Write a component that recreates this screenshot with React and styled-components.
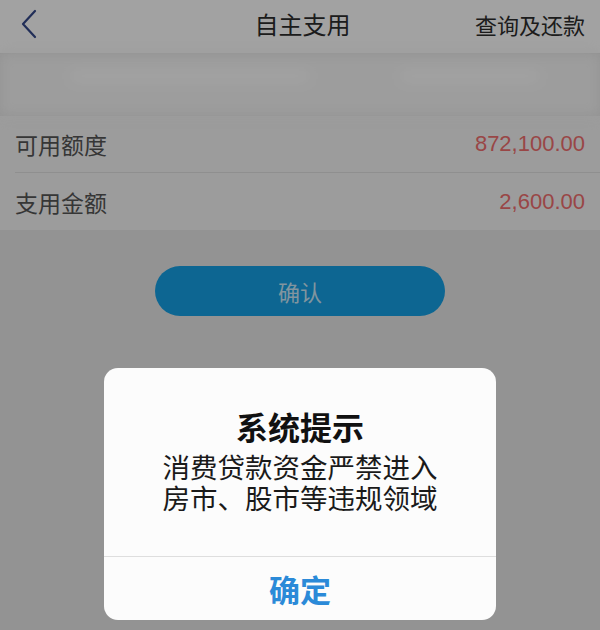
import { createGlobalStyle, styled } from "styled-components";

const GlobalStyle = createGlobalStyle`
  html, body {
    margin: 0;
    padding: 0;
    background: #e6e6e6;
  }
  * {
    box-sizing: border-box;
  }
`;

const Page = styled.div`
  position: relative;
  width: 600px;
  height: 630px;
  overflow: hidden;
  background: #e6e6e6;
  font-family: "Noto Sans CJK SC", "Noto Sans", sans-serif;
`;

const NavBar = styled.div`
  height: 54px;
  background: #fdfdfd;
  border-bottom: 1px solid #e2e2e2;
  display: grid;
  grid-template-columns: 1fr auto 1fr;
  align-items: center;
  padding: 0 15px 6px 20px;
`;

const BackButton = styled.div`
  display: flex;
  align-items: center;
`;

const NavTitle = styled.div`
  font-size: 24px;
  color: #2d2d2d;
`;

const NavAction = styled.div`
  justify-self: end;
  font-size: 22px;
  color: #2d2d2d;
`;

const BlurBlock = styled.div`
  height: 62px;
  background: #f6f6f6;
  border-bottom: 1px solid #e8e8e8;
  display: flex;
  justify-content: space-between;
  align-items: center;
  padding: 0 60px 18px 70px;
  filter: blur(7px);
`;

const BlurBar = styled.div`
  height: 12px;
  width: ${(p) => p.$w}px;
  background: #ffffff;
  border-radius: 6px;
`;

const InfoList = styled.div`
  background: #f4f4f4;
  padding-left: 15px;
`;

const Row = styled.div`
  height: 57px;
  display: flex;
  justify-content: space-between;
  align-items: center;
  padding-right: 15px;
  border-bottom: ${(p) => (p.$last ? "none" : "1px solid #e0e0e0")};
`;

const Label = styled.span`
  font-size: 23px;
  color: #555;
`;

const Amount = styled.span`
  font-family: "Liberation Sans", Arial, sans-serif;
  font-size: 22px;
  color: #f06e6e;
`;

const ButtonArea = styled.div`
  display: flex;
  justify-content: center;
  padding-top: 36px;
`;

const ConfirmButton = styled.button`
  width: 290px;
  height: 50px;
  border: none;
  border-radius: 25px;
  background: #15a0e4;
  color: rgba(255, 255, 255, 0.78);
  font-family: inherit;
  font-size: 22px;
`;

const Mask = styled.div`
  position: absolute;
  inset: 0;
  background: rgba(0, 0, 0, 0.36);
`;

const Dialog = styled.div`
  position: absolute;
  left: 104px;
  top: 368px;
  width: 392px;
  height: 252px;
  background: #fcfcfc;
  border-radius: 14px;
  display: flex;
  flex-direction: column;
  overflow: hidden;
`;

const DialogBody = styled.div`
  flex: 1;
  display: flex;
  flex-direction: column;
  align-items: center;
  padding-top: 38px;
  border-bottom: 1px solid #dedede;
`;

const DialogTitle = styled.div`
  font-size: 32px;
  line-height: 40px;
  font-weight: 700;
  color: #111;
`;

const DialogText = styled.div`
  margin-top: 5px;
  font-size: 27.5px;
  line-height: 31px;
  color: #1a1a1a;
  text-align: center;
`;

const DialogButton = styled.div`
  height: 63px;
  display: flex;
  align-items: center;
  justify-content: center;
  font-size: 31px;
  font-weight: 700;
  color: #2b8ad8;
`;

export default function App() {
  return (
    <>
      <GlobalStyle />
      <Page>
        <NavBar>
          <BackButton>
            <svg width="18" height="30" viewBox="0 0 18 30">
              <path
                d="M15 2 L3 15 L15 28"
                fill="none"
                stroke="#34498a"
                strokeWidth="2.2"
                strokeLinecap="round"
                strokeLinejoin="round"
              />
            </svg>
          </BackButton>
          <NavTitle>自主支用</NavTitle>
          <NavAction>查询及还款</NavAction>
        </NavBar>
        <BlurBlock>
          <BlurBar $w={240} />
          <BlurBar $w={140} />
        </BlurBlock>
        <InfoList>
          <Row>
            <Label>可用额度</Label>
            <Amount>872,100.00</Amount>
          </Row>
          <Row $last>
            <Label>支用金额</Label>
            <Amount>2,600.00</Amount>
          </Row>
        </InfoList>
        <ButtonArea>
          <ConfirmButton>确认</ConfirmButton>
        </ButtonArea>
        <Mask />
        <Dialog>
          <DialogBody>
            <DialogTitle>系统提示</DialogTitle>
            <DialogText>
              消费贷款资金严禁进入
              <br />
              房市、股市等违规领域
            </DialogText>
          </DialogBody>
          <DialogButton>确定</DialogButton>
        </Dialog>
      </Page>
    </>
  );
}
